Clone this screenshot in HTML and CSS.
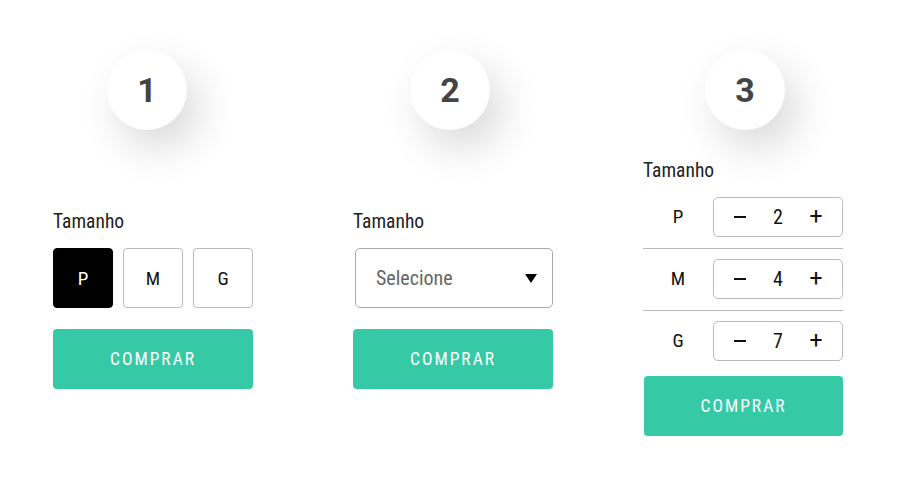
FILE: index.html
```html
<!DOCTYPE html>
<html lang="pt">
<head>
<meta charset="utf-8">
<title>Tamanho</title>
<link rel="stylesheet" href="styles.css">
</head>
<body>
<main class="page">
  <section class="col col-1">
    <div class="badge badge-1">1</div>
    <div class="area">
      <div class="label">Tamanho</div>
      <div class="sizes">
        <div class="size selected">P</div>
        <div class="size">M</div>
        <div class="size">G</div>
      </div>
      <button class="buy">COMPRAR</button>
    </div>
  </section>
  <section class="col col-2">
    <div class="badge badge-2">2</div>
    <div class="area">
      <div class="label">Tamanho</div>
      <div class="select">
        <span class="placeholder">Selecione</span>
        <span class="caret"></span>
      </div>
      <button class="buy">COMPRAR</button>
    </div>
  </section>
  <section class="col col-3">
    <div class="badge badge-3">3</div>
    <div class="area area-3">
      <div class="label">Tamanho</div>
      <div class="rows">
        <div class="row">
          <span class="row-size">P</span>
          <div class="stepper"><span class="minus"></span><span>2</span><span class="plus">+</span></div>
        </div>
        <div class="row">
          <span class="row-size">M</span>
          <div class="stepper"><span class="minus"></span><span>4</span><span class="plus">+</span></div>
        </div>
        <div class="row">
          <span class="row-size">G</span>
          <div class="stepper"><span class="minus"></span><span>7</span><span class="plus">+</span></div>
        </div>
      </div>
      <button class="buy buy-3">COMPRAR</button>
    </div>
  </section>
</main>
</body>
</html>
```

FILE: styles.css
```css
* { box-sizing: border-box; }
html, body { margin: 0; padding: 0; background: #fff; }
body {
  font-family: "Roboto Condensed", Roboto, "Liberation Sans", sans-serif;
  color: #222;
}
.page {
  display: flex;
  align-items: flex-start;
  padding: 50px 0 0 53px;
  width: 900px;
  height: 487px;
  overflow: hidden;
}
.col {
  width: 200px;
  display: flex;
  flex-direction: column;
}
.col-2 { margin-left: 100px; }
.col-3 { margin-left: 90px; }
.badge {
  width: 80px;
  height: 80px;
  border-radius: 50%;
  background: #fff;
  box-shadow: 12px 18px 40px rgba(0, 0, 0, 0.15);
  display: flex;
  align-items: center;
  justify-content: center;
  font-family: Roboto, sans-serif;
  font-weight: 700;
  font-size: 34px;
  color: #444;
}
.badge-1 { margin-left: 54px; }
.badge-2 { margin-left: 57px; }
.badge-3 { margin-left: 62px; }
.area {
  height: 340px;
  display: flex;
  flex-direction: column;
  justify-content: center;
}
.area-3 { padding-bottom: 5px; }
.label {
  font-size: 19.5px;
  line-height: 22px;
  color: #222;
  margin-bottom: 15px;
}
.sizes {
  display: flex;
  gap: 10px;
  margin-bottom: 21px;
}
.size {
  width: 60px;
  height: 60px;
  border: 1px solid #bbb;
  border-radius: 4px;
  display: flex;
  align-items: center;
  justify-content: center;
  font-size: 19px;
  color: #111;
}
.size.selected {
  background: #000;
  border-color: #000;
  color: #fff;
}
.select {
  margin-left: 2px;
  width: 198px;
  height: 60px;
  border: 1px solid #aaa;
  border-radius: 5px;
  display: flex;
  align-items: center;
  justify-content: space-between;
  padding: 0 15px 0 20px;
  margin-bottom: 21px;
}
.placeholder {
  font-size: 20px;
  color: #666;
}
.caret {
  width: 0;
  height: 0;
  border-left: 6.5px solid transparent;
  border-right: 6.5px solid transparent;
  border-top: 9px solid #000;
}
.buy {
  width: 200px;
  height: 60px;
  border: none;
  border-radius: 4px;
  background: #35c9a6;
  color: #fff;
  font-family: inherit;
  font-weight: 400;
  font-size: 17.5px;
  letter-spacing: 2px;
  padding: 0;
  cursor: pointer;
}
.rows { display: flex; flex-direction: column; }
.row {
  display: flex;
  align-items: center;
  padding: 10px 0 11px;
  border-bottom: 1px solid #bbb;
}
.row:first-child { padding-top: 0; }
.row:last-child { border-bottom: none; padding-bottom: 15px; }
.row-size {
  width: 70px;
  text-align: center;
  font-size: 19px;
  color: #111;
}
.stepper {
  width: 130px;
  height: 40px;
  border: 1px solid #bbb;
  border-radius: 5px;
  display: grid;
  grid-template-columns: repeat(3, 1fr);
  align-items: center;
  justify-items: center;
  padding: 0 7px;
  font-size: 20px;
  color: #111;
}
.stepper .minus {
  width: 12px;
  height: 2px;
  background: #111;
}
.stepper .plus {
  font-family: Roboto, sans-serif;
  font-size: 23px;
  line-height: 1;
}
.buy-3 { margin-left: 1px; width: 199px; }
```
